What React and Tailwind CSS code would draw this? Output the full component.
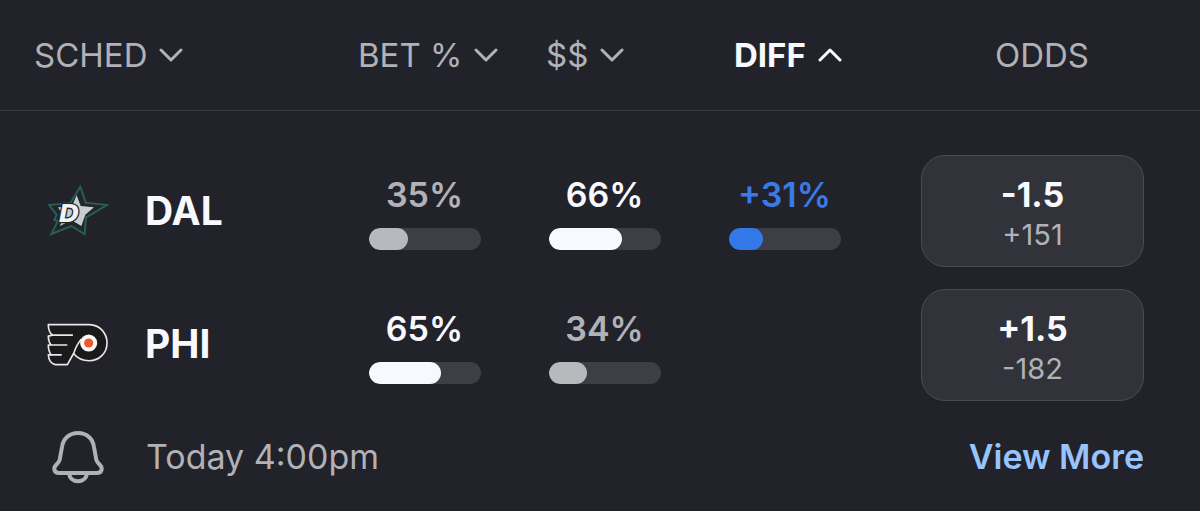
import { useState } from "react";

const columns = [
  { key: "sched", label: "SCHED", className: "w-[28%] pl-[34px]" },
  { key: "bets", label: "BET %", className: "w-[15%] pl-[22px]" },
  { key: "money", label: "$$", className: "w-[15%] pl-[30px]" },
  { key: "diff", label: "DIFF", className: "w-[15%] pl-[38px]" },
];

const teams = [
  {
    name: "DAL",
    Logo: StarsLogo,
    bets: 35,
    money: 66,
    diff: 31,
    line: "-1.5",
    price: "+151",
  },
  {
    name: "PHI",
    Logo: FlyersLogo,
    bets: 65,
    money: 34,
    diff: null,
    line: "+1.5",
    price: "-182",
  },
];

const tones = {
  muted: { text: "text-[#b1b1b8]", bar: "bg-[#b8b9bc]" },
  strong: { text: "text-[#f8f9ff]", bar: "bg-[#f8f9fe]" },
  blue: { text: "text-[#3a7ae6]", bar: "bg-[#3479e9]" },
};

function StarsLogo() {
  return (
    <svg viewBox="51 45 186 153" className="w-[62px] shrink-0" aria-hidden="true">
      <path
        d="M151 50 L167 98 L231 105 L168 142 L164 192 L124 168 L64 192 L84 152 L73 150 L80 134 L57 105 L121 99 Z"
        fill="#20262b"
        stroke="#2a5d50"
        strokeWidth="6"
      />
      <path
        d="M140 76 L152 108 L192 112 L166 134 L154 168 L124 150 L90 168 L100 137 L84 112 L126 108 Z"
        fill="#c9cdcf"
      />
      <text
        x="86"
        y="157"
        fontSize="74"
        fill="#f1f2f3"
        stroke="#22272b"
        strokeWidth="8"
        strokeLinejoin="round"
        className="font-['DejaVu_Sans',sans-serif] font-bold italic [paint-order:stroke]"
      >
        D
      </text>
    </svg>
  );
}

function FlyersLogo() {
  return (
    <svg viewBox="51 54 189 132" className="w-[62px] shrink-0" aria-hidden="true">
      <path
        d="M55 59 H181 C211 60 234 84 234 115 C234 146 210 169 180 169 C159 169 142 160 132 147 L113 181 H76 C64 178 56 167 55 151 H64 C58 144 55 134 55 121 H63 C58 115 55 107 55 94 L68 91 C59 84 55 73 55 59 Z"
        fill="#1b1a1b"
        stroke="#e7e6e9"
        strokeWidth="5"
        strokeLinejoin="round"
      />
      <path
        d="M66 91 H130 M61 121 H113 M62 151 H96 M132 148 C138 130 146 114 156 103"
        fill="none"
        stroke="#e7e6e9"
        strokeWidth="5"
      />
      <circle cx="178" cy="115" r="26" fill="#fbfbfc" />
      <circle cx="178" cy="115" r="14" fill="#ee5a2c" />
    </svg>
  );
}

function BellIcon() {
  return (
    <svg
      viewBox="0 0 52 54"
      className="w-[52px]"
      fill="none"
      stroke="#b1b1b8"
      strokeWidth="4"
      strokeLinejoin="round"
      aria-hidden="true"
    >
      <path d="M26 3 C17 3 11 9 10 17 L8 28 C8 31 6 33 4 35 C1 38 2 43 7 43 H45 C50 43 51 38 48 35 C46 33 44 31 44 28 L42 17 C41 9 35 3 26 3 Z" />
      <path d="M17 43 C18 54 34 54 35 43" />
    </svg>
  );
}

function Chevron({ up }) {
  return (
    <svg
      viewBox="0 0 24 16"
      className="w-6"
      fill="none"
      stroke="currentColor"
      strokeWidth="3"
      strokeLinecap="round"
      strokeLinejoin="round"
      aria-hidden="true"
    >
      <path d={up ? "M2 13 L12 3 L22 13" : "M2 3 L12 13 L22 3"} />
    </svg>
  );
}

function Meter({ value, tone, prefix = "" }) {
  return (
    <div className="flex flex-col items-center gap-[13px] pt-[3px]">
      <span className={`leading-10 font-semibold ${tones[tone].text}`}>
        {prefix}
        {value}%
      </span>
      <div className="h-[22px] w-28 overflow-hidden rounded-full bg-[#3e3e46]">
        <div
          className={`h-full rounded-full ${tones[tone].bar}`}
          style={{ width: `${value}%` }}
        />
      </div>
    </div>
  );
}

export default function App() {
  const [sortBy, setSortBy] = useState("diff");

  return (
    <main className="min-h-screen bg-[#22222a] font-[Inter,sans-serif] text-[34px] text-[#b1b1b8]">
      <table className="w-full table-fixed border-collapse">
        <thead>
          <tr className="h-[110px] border-b border-[#3c3c44]">
            {columns.map((column) => {
              const sorted = sortBy === column.key;

              return (
                <th
                  key={column.key}
                  aria-sort={sorted ? "ascending" : "none"}
                  className={`text-left ${column.className}`}
                >
                  <button
                    onClick={() => setSortBy(column.key)}
                    className={`flex items-center gap-3 text-[33px] leading-10 whitespace-nowrap ${
                      sorted ? "font-bold text-[#f8f9ff]" : "font-normal"
                    }`}
                  >
                    {column.label}
                    <Chevron up={sorted} />
                  </button>
                </th>
              );
            })}
            <th className="w-[27%] pl-2 text-center text-[33px] leading-10 font-normal">
              ODDS
            </th>
          </tr>
        </thead>

        <tbody className="before:block before:h-[33px]">
          {teams.map(({ name, Logo, bets, money, diff, line, price }) => (
            <tr key={name}>
              <th className="pl-[47px] text-left">
                <div className="flex items-center gap-9 text-[39px] leading-10 font-bold text-[#f8f9ff]">
                  <Logo />
                  {name}
                </div>
              </th>
              <td className="pr-[3px]">
                <Meter value={bets} tone={bets > 50 ? "strong" : "muted"} />
              </td>
              <td className="pr-[3px]">
                <Meter value={money} tone={money > 50 ? "strong" : "muted"} />
              </td>
              <td className="pr-[3px]">
                {diff !== null && <Meter value={diff} tone="blue" prefix="+" />}
              </td>
              <td className="py-[11px] pr-14 pl-[45px]">
                <button className="flex h-28 w-full flex-col items-center justify-center rounded-3xl border border-[#4b4b54] bg-[#32323a] pt-2">
                  <span className="leading-10 font-bold text-[#f8f9ff]">{line}</span>
                  <span className="text-[29px] leading-10">{price}</span>
                </button>
              </td>
            </tr>
          ))}
        </tbody>
      </table>

      <footer className="flex items-center pt-[18px] pr-14 pl-[52px]">
        <button aria-label="Notify me">
          <BellIcon />
        </button>
        <time className="pl-[42px] leading-10">Today 4:00pm</time>
        <a href="#more" className="ml-auto leading-10 font-semibold text-[#97c4fc]">
          View More
        </a>
      </footer>
    </main>
  );
}
